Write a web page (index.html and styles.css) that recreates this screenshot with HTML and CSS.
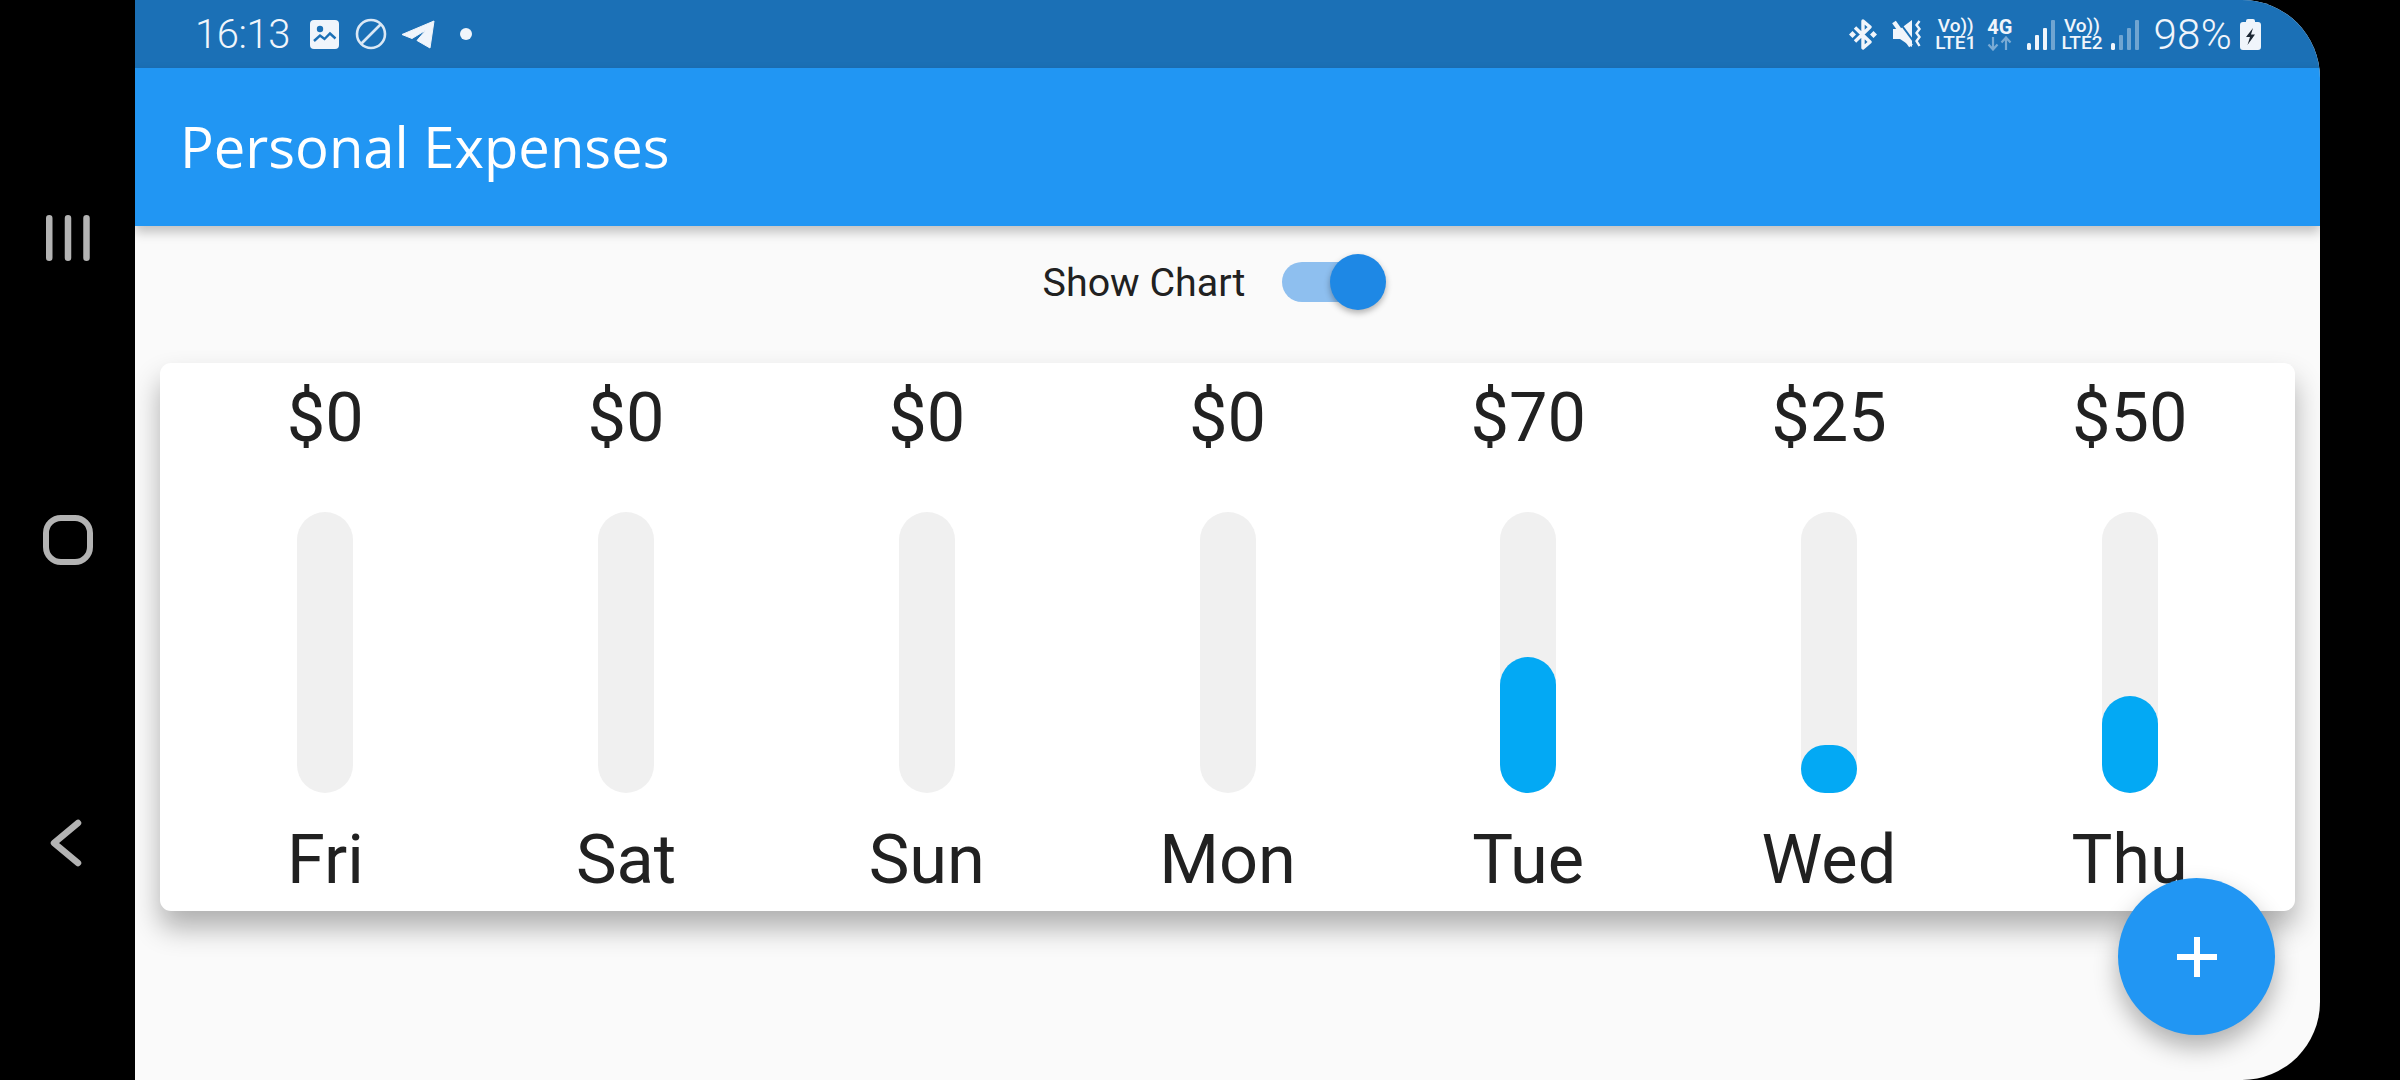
FILE: index.html
```html
<!DOCTYPE html>
<html>
<head lang="en">
	<meta charset="UTF-8">
	<title>Personal Expenses</title>
	<link rel="stylesheet" href="styles.css">
</head>
<body>
	<div class="nav-keys">
		<svg class="key key-recent" width="44" height="46" viewBox="0 0 44 46">
			<path d="M3.250 3.250V42.750M22 3.250V42.750M40.500 3.250V42.750" fill="none" stroke="#b3b3b3" stroke-width="6.500" stroke-linecap="round"/>
		</svg>
		<svg class="key key-home" width="50" height="50" viewBox="0 0 50 50">
			<rect x="3" y="3" width="44" height="44" rx="15" fill="none" stroke="#b3b3b3" stroke-width="6"/>
		</svg>
		<svg class="key key-back" width="32" height="48" viewBox="0 0 32 48">
			<path d="M28 4L4 24L28 44" fill="none" stroke="#b3b3b3" stroke-width="6.500" stroke-linecap="round" stroke-linejoin="round"/>
		</svg>
	</div>

	<div class="screen">
		<div class="status-bar">
			<div class="status-left">
				<span class="clock">16:13</span>
				<svg width="29" height="29" viewBox="0 0 29 29">
					<rect width="29" height="29" rx="4" fill="#f0f5fb"/>
					<circle cx="10" cy="9" r="3.200" fill="#1b70b6"/>
					<path d="M4 21L10 15.500L14.500 19L20 13.500L25.500 18.500" fill="none" stroke="#1b70b6" stroke-width="2.400"/>
				</svg>
				<svg class="icon-block" width="32" height="32" viewBox="0 0 32 32">
					<circle cx="16" cy="16" r="14" fill="none" stroke="#dbe8f5" stroke-width="2.600"/>
					<path d="M6 26L26 6" stroke="#dbe8f5" stroke-width="2.600"/>
				</svg>
				<svg class="icon-plane" width="34" height="29" viewBox="0 0 34 29">
					<path d="M1 14.500L33 1L29 28L16 20.500L25 10L11 18.500Z" fill="#f0f5fb" stroke="#f0f5fb" stroke-width="1" stroke-linejoin="round"/>
				</svg>
				<span class="dot"></span>
			</div>
			<div class="status-right">
				<svg class="icon-bt" width="28" height="31" viewBox="0 0 28 31">
					<path d="M6 8.500L21 23L14 29V2L21 8L6 22.500" fill="none" stroke="#f0f5fb" stroke-width="3.400" stroke-linejoin="round"/>
					<path d="M0 15.500L3.500 12L7 15.500L3.500 19ZM21 15.500L24.500 12L28 15.500L24.500 19Z" fill="#f0f5fb"/>
				</svg>
				<svg class="icon-mute" width="30" height="30" viewBox="0 0 30 30">
					<path d="M1 10H8L20 1V28L8 20H1Z" fill="#f0f5fb"/>
					<path d="M5 0L22 23" stroke="#1b70b6" stroke-width="2"/>
					<path d="M2 3L19 27" stroke="#f0f5fb" stroke-width="4.500"/>
					<path d="M27.500 2L24.500 6L27.500 10L24.500 14L27.500 18L24.500 22L27.500 27" fill="none" stroke="#f0f5fb" stroke-width="2.400"/>
				</svg>
				<div class="net-tag net-tag-one"><span>Vo))</span><span>LTE1</span></div>
				<div class="net-type">
					<span>4G</span>
					<svg width="25" height="15" viewBox="0 0 25 15">
						<path d="M6 1V13M1.500 8.500L6 13.500L10.500 8.500" fill="none" stroke="#f0f5fb" stroke-opacity=".45" stroke-width="2.200"/>
						<path d="M19 14V2M14.500 6.500L19 1.500L23.500 6.500" fill="none" stroke="#f0f5fb" stroke-opacity=".45" stroke-width="2.200"/>
					</svg>
				</div>
				<svg class="icon-signal" width="28" height="30" viewBox="0 0 28 30">
					<rect x="0" y="23" width="4" height="7" rx="1.500" fill="#f0f5fb"/>
					<rect x="8" y="15" width="4" height="15" rx="1" fill="#f0f5fb"/>
					<rect x="16" y="8" width="4" height="22" rx="1" fill="#f0f5fb"/>
					<rect x="24" y="0" width="4" height="30" rx="1" fill="#f0f5fb" fill-opacity=".4"/>
				</svg>
				<div class="net-tag net-tag-two"><span>Vo))</span><span>LTE2</span></div>
				<svg class="icon-signal" width="28" height="30" viewBox="0 0 28 30">
					<rect x="0" y="23" width="4" height="7" rx="1.500" fill="#f0f5fb"/>
					<rect x="8" y="15" width="4" height="15" rx="1" fill="#f0f5fb" fill-opacity=".4"/>
					<rect x="16" y="8" width="4" height="22" rx="1" fill="#f0f5fb" fill-opacity=".4"/>
					<rect x="24" y="0" width="4" height="30" rx="1" fill="#f0f5fb" fill-opacity=".4"/>
				</svg>
				<span class="battery-text">98%</span>
				<svg class="icon-battery" width="21" height="31" viewBox="0 0 21 31">
					<path d="M6 2a2 2 0 0 1 2-2h5a2 2 0 0 1 2 2v1h3a3 3 0 0 1 3 3v22a3 3 0 0 1-3 3H3a3 3 0 0 1-3-3V6a3 3 0 0 1 3-3h3Z" fill="#f0f5fb"/>
					<path d="M13 9L6 18H10L7.500 26L15 15.500H11Z" fill="#1c2733"/>
				</svg>
			</div>
		</div>

		<div class="app-bar">
			<h1 class="app-title">Personal Expenses</h1>
		</div>

		<div class="content">
			<div class="toggle-row">
				<span class="toggle-label">Show Chart</span>
				<div class="switch">
					<div class="switch-track"></div>
					<div class="switch-thumb"></div>
				</div>
			</div>

			<div class="chart-card">
				<div class="day">
					<div class="amount">$0</div>
					<div class="bar"></div>
					<div class="day-name">Fri</div>
				</div>
				<div class="day">
					<div class="amount">$0</div>
					<div class="bar"></div>
					<div class="day-name">Sat</div>
				</div>
				<div class="day">
					<div class="amount">$0</div>
					<div class="bar"></div>
					<div class="day-name">Sun</div>
				</div>
				<div class="day">
					<div class="amount">$0</div>
					<div class="bar"></div>
					<div class="day-name">Mon</div>
				</div>
				<div class="day">
					<div class="amount">$70</div>
					<div class="bar"><div class="bar-fill" style="height: 48.3%"></div></div>
					<div class="day-name">Tue</div>
				</div>
				<div class="day">
					<div class="amount">$25</div>
					<div class="bar"><div class="bar-fill" style="height: 17.2%"></div></div>
					<div class="day-name">Wed</div>
				</div>
				<div class="day">
					<div class="amount">$50</div>
					<div class="bar"><div class="bar-fill" style="height: 34.5%"></div></div>
					<div class="day-name">Thu</div>
				</div>
			</div>
		</div>

		<div class="fab">
			<svg width="40" height="40" viewBox="0 0 40 40">
				<path d="M20 0V40M0 20H40" stroke="#fff" stroke-width="6"/>
			</svg>
		</div>
	</div>
</body>
</html>
```

FILE: styles.css
```css
*{
	margin: 0;
	padding: 0;
	box-sizing: border-box;
}
body{
	width: 2400px;
	height: 1080px;
	background: #000;
	display: flex;
	overflow: hidden;
	font-family: "Roboto", "Liberation Sans", sans-serif;
}

/* android keys on the left */
.nav-keys{
	width: 135px;
	display: flex;
	flex-direction: column;
	align-items: flex-start;
}
.key{
	display: block;
}
.key-recent{
	margin: 215px 0 0 46px;
}
.key-home{
	margin: 254px 0 0 43px;
}
.key-back{
	margin: 254px 0 0 50px;
}

.screen{
	width: 2185px;
	height: 1080px;
	position: relative;
	overflow: hidden;
	display: flex;
	flex-direction: column;
	background: #fafafa;
	border-radius: 0 78px 78px 0;
}

/* status bar */
.status-bar{
	height: 68px;
	flex-shrink: 0;
	display: flex;
	align-items: center;
	justify-content: space-between;
	padding: 0 59px 0 60px;
	background: #1b70b6;
	color: #f0f5fb;
}
.status-left,.status-right{
	display: flex;
	align-items: center;
}
.clock{
	width: 115px;
	font-size: 40px;
	font-weight: 300;
	letter-spacing: -.4px;
}
.icon-block{
	margin-left: 16px;
}
.icon-plane{
	margin-left: 14px;
}
.dot{
	width: 12px;
	height: 12px;
	margin-left: 25px;
	background: #f0f5fb;
	border-radius: 50%;
}
.icon-mute{
	margin-left: 15px;
}
.net-tag{
	display: flex;
	flex-direction: column;
	align-items: center;
	font-size: 19px;
	line-height: 17px;
	font-weight: 500;
}
.net-tag-one{
	margin-left: 13px;
}
.net-tag-two{
	margin-left: 6px;
}
.net-type{
	display: flex;
	flex-direction: column;
	align-items: center;
	margin-left: 11px;
	font-size: 20px;
	line-height: 18px;
	font-weight: 700;
}
.net-type svg{
	display: block;
}
.icon-signal{
	margin: 2px 0 0 15px;
}
.net-tag-two + .icon-signal{
	margin-left: 9px;
}
.battery-text{
	margin-left: 14px;
	font-size: 42px;
	font-weight: 300;
	letter-spacing: .3px;
}
.icon-battery{
	margin-left: 8px;
}

/* app bar */
.app-bar{
	height: 158px;
	flex-shrink: 0;
	display: flex;
	align-items: center;
	padding: 0 0 2px 45px;
	background: #2196f3;
	box-shadow: 0 6px 11px rgba(0, 0, 0, .24);
	position: relative;
}
.app-title{
	font-family: "Open Sans", "Liberation Sans", sans-serif;
	font-size: 56.2px;
	font-weight: 400;
	color: #fff;
}

/* switch row */
.toggle-row{
	height: 112px;
	display: flex;
	align-items: center;
	justify-content: center;
	padding-right: 26px;
}
.toggle-label{
	font-size: 39.4px;
	color: #212121;
}
.switch{
	width: 104px;
	height: 56px;
	margin-left: 37px;
	position: relative;
}
.switch-track{
	width: 92px;
	height: 40px;
	margin-top: 8px;
	background: #8ebfef;
	border-radius: 20px;
}
.switch-thumb{
	width: 56px;
	height: 56px;
	position: absolute;
	top: 0;
	right: 0;
	background: #1e88e5;
	border-radius: 50%;
	box-shadow: 0 3px 6px rgba(0, 0, 0, .3);
}

/* chart */
.chart-card{
	height: 548px;
	margin: 25px 25px 0;
	padding: 0 15px;
	display: flex;
	background: #fff;
	border-radius: 11px;
	box-shadow: 0 17px 28px rgba(0, 0, 0, .3);
}
.day{
	flex: 1;
	display: flex;
	flex-direction: column;
	align-items: center;
	color: #212121;
}
.amount,.day-name{
	font-size: 68.5px;
	line-height: 80px;
}
.amount{
	margin-top: 15px;
}
.bar{
	width: 56px;
	height: 281px;
	margin-top: 54px;
	display: flex;
	align-items: flex-end;
	background: #f0f0f0;
	border-radius: 28px;
}
.bar-fill{
	width: 100%;
	background: #03a9f4;
	border-radius: 28px;
}
.day-name{
	margin-top: 27px;
}

.fab{
	width: 157px;
	height: 157px;
	position: absolute;
	right: 45px;
	bottom: 45px;
	display: flex;
	align-items: center;
	justify-content: center;
	background: #2196f3;
	border-radius: 50%;
	box-shadow: 0 12px 24px rgba(0, 0, 0, .3);
}
```
